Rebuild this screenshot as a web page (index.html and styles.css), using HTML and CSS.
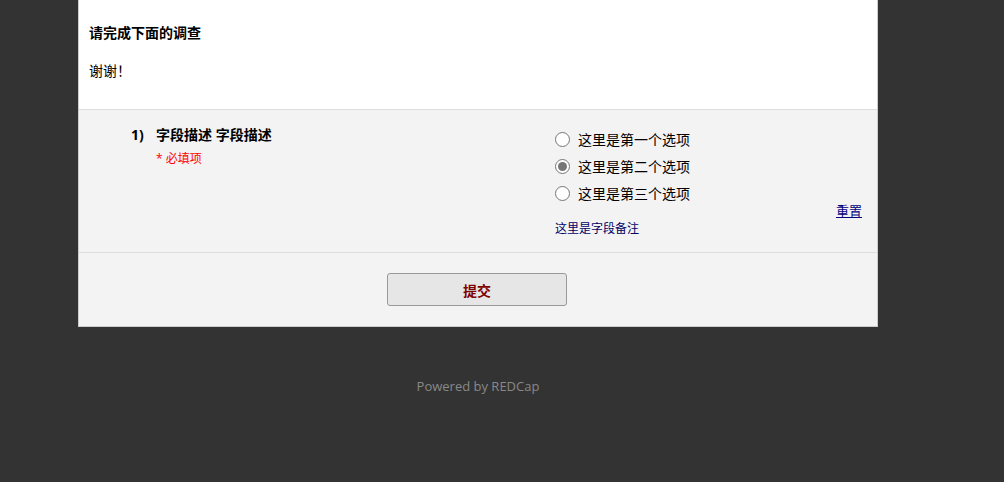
FILE: index.html
```html
<!DOCTYPE html>
<html lang="zh-CN">
<head>
<meta charset="utf-8">
<title>Survey</title>
<link rel="stylesheet" href="styles.css">
</head>
<body>
<div class="container">
  <div class="header">
    <div class="title">请完成下面的调查</div>
    <div class="thanks">谢谢！</div>
  </div>
  <div class="question">
    <div class="qnum">1)</div>
    <div class="qlabel">
      <div class="qtext">字段描述 字段描述</div>
      <div class="required">* 必填项</div>
    </div>
    <div class="answers">
      <label class="option"><span class="radio"></span>这里是第一个选项</label>
      <label class="option"><span class="radio checked"></span>这里是第二个选项</label>
      <label class="option"><span class="radio"></span>这里是第三个选项</label>
      <div class="reset-row"><a class="reset" href="#">重置</a></div>
      <div class="note">这里是字段备注</div>
    </div>
  </div>
  <div class="submit-row">
    <button class="submit" type="button">提交</button>
  </div>
</div>
<div class="footer">Powered by REDCap</div>
</body>
</html>
```

FILE: styles.css
```css
html, body {
  margin: 0;
  padding: 0;
}
body {
  background: #333333;
  font-family: "Open Sans", "Noto Sans CJK SC", sans-serif;
  font-size: 14px;
  color: #000;
  height: 482px;
}
.container {
  width: 798px;
  margin-left: 78px;
  border-left: 1px solid #cccccc;
  border-right: 1px solid #cccccc;
  border-bottom: 1px solid #cccccc;
  background: #f3f3f3;
}
.header {
  background: #fff;
  padding: 23px 10px 0 10px;
  height: 86px;
  border-bottom: 1px solid #dddddd;
  box-sizing: content-box;
}
.title {
  font-weight: bold;
  line-height: 19px;
}
.thanks {
  margin-top: 19px;
  line-height: 19px;
}
.question {
  display: grid;
  grid-template-columns: 52px 25px 399px 1fr;
  height: 143px;
  border-bottom: 1px solid #dddddd;
  box-sizing: border-box;
  padding-top: 16px;
}
.qnum {
  grid-column: 2;
  font-weight: bold;
  line-height: 18px;
}
.qlabel {
  grid-column: 3;
}
.qtext {
  font-weight: bold;
  line-height: 18px;
}
.required {
  color: #ff0000;
  font-size: 12px;
  line-height: 16px;
  margin-top: 7px;
}
.answers {
  grid-column: 4;
  padding-right: 15px;
}
.option {
  display: flex;
  align-items: center;
  height: 27px;
  line-height: 27px;
}
.radio {
  width: 13px;
  height: 13px;
  border: 1.5px solid #767676;
  border-radius: 50%;
  background: #fff;
  margin-right: 8px;
  position: relative;
  flex: none;
}
.radio.checked::after {
  content: "";
  position: absolute;
  left: 2px;
  top: 2px;
  width: 9px;
  height: 9px;
  border-radius: 50%;
  background: #767676;
}
.reset-row {
  display: flex;
  justify-content: flex-end;
  margin-top: -4px;
  line-height: 16px;
  font-size: 13px;
}
.reset {
  color: #000080;
  text-decoration: underline;
}
.note {
  color: #000066;
  font-size: 12px;
  line-height: 16px;
  margin-top: 2px;
}
.submit-row {
  height: 73px;
  display: flex;
  justify-content: center;
  align-items: flex-start;
  padding-top: 20px;
  padding-right: 2px;
  box-sizing: border-box;
}
.submit {
  width: 180px;
  height: 33px;
  background: #e6e6e6;
  border: 1px solid #999999;
  border-radius: 3px;
  color: #800000;
  font-family: "Open Sans", "Noto Sans CJK SC", sans-serif;
  font-size: 14px;
  font-weight: bold;
  padding: 0;
}
.footer {
  text-align: center;
  width: 800px;
  margin-left: 78px;
  margin-top: 50px;
  color: #888888;
  font-size: 13px;
  line-height: 18px;
}
```
